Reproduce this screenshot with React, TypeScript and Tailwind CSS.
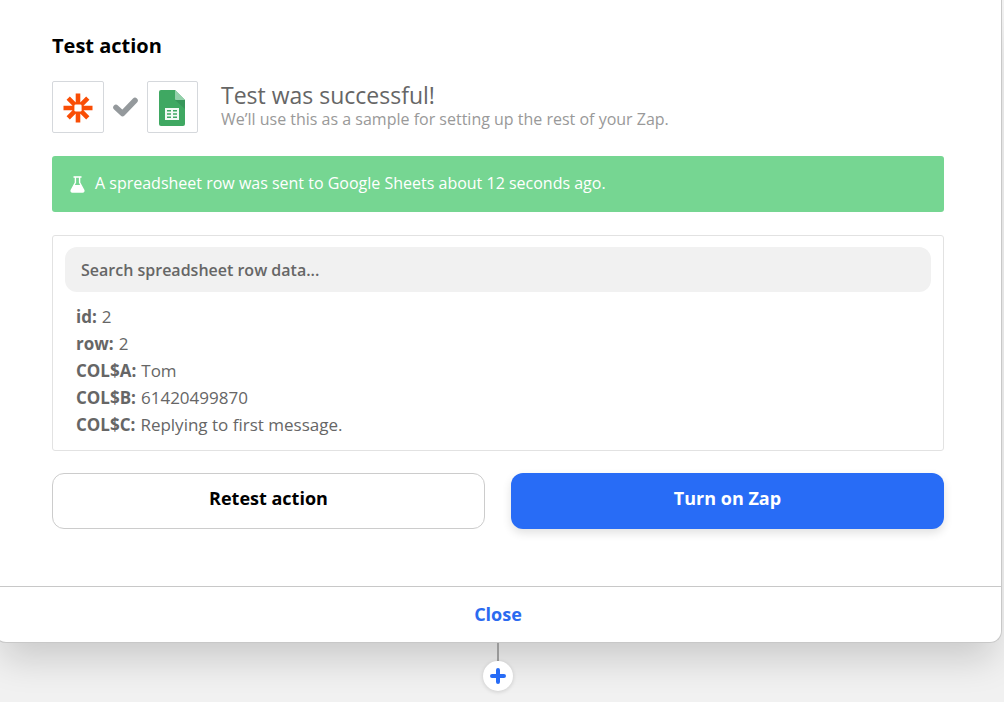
import { useState } from "react";

interface SampleField {
  label: string;
  value: string;
}

const fields: SampleField[] = [
  { label: "id", value: "2" },
  { label: "row", value: "2" },
  { label: "COL$A", value: "Tom" },
  { label: "COL$B", value: "61420499870" },
  { label: "COL$C", value: "Replying to first message." },
];

const ZapierIcon = () => (
  <svg width="30" height="30" viewBox="0 0 30 30" aria-hidden="true">
    <g stroke="#f94d05" strokeWidth="4.6">
      <path d="M15 0.5v29M0.5 15h29M5.2 5.2l19.6 19.6M24.8 5.2L5.2 24.8" />
    </g>
    <rect x="11.4" y="11.4" width="7.2" height="7.2" rx="1.4" fill="#fff" />
  </svg>
);

const SheetsIcon = () => (
  <svg width="26" height="36" viewBox="0 0 26 36" aria-hidden="true">
    <path d="M2 0h14l10 10v24a2 2 0 0 1-2 2H2a2 2 0 0 1-2-2V2a2 2 0 0 1 2-2z" fill="#3fa862" />
    <path d="M16 10h10v9z" fill="#37965a" />
    <path d="M16 0l10 10h-9a1 1 0 0 1-1-1z" fill="#93d0aa" />
    <path
      d="M6 18h14v12H6zM8 20v1.600h4v-1.600zM14 20v1.600h4v-1.600zM8 23.200v1.600h4v-1.600zM14 23.200v1.600h4v-1.600zM8 26.400v1.600h4v-1.600zM14 26.400v1.600h4v-1.600z"
      fill="#f3faf5"
      fillRule="evenodd"
    />
  </svg>
);

const CheckIcon = () => (
  <svg width="25" height="20" viewBox="0 0 25 20" aria-hidden="true">
    <path
      d="M3 10.5l6.5 6L22 3.5"
      fill="none"
      stroke="#94999c"
      strokeWidth="5.6"
      strokeLinecap="round"
      strokeLinejoin="round"
    />
  </svg>
);

const FlaskIcon = () => (
  <svg width="15" height="17" viewBox="0 0 15 17" aria-hidden="true">
    <path d="M3.5 1h8" stroke="#fff" strokeWidth="1.6" />
    <path
      d="M5.4 1v5.5L1.3 14c-.5 1 0 2 1.1 2h10.2c1.1 0 1.6-1 1.1-2L9.600 6.500V1"
      fill="none"
      stroke="#fff"
      strokeWidth="1.4"
    />
    <path d="M4 9h7l3.200 6-.8 1H1.600L.8 15z" fill="#fff" />
  </svg>
);

const App = () => {
  const [search, setSearch] = useState("");

  const visibleFields = fields.filter((field) =>
    `${field.label} ${field.value}`.toLowerCase().includes(search.toLowerCase())
  );

  return (
    <div className="min-h-screen overflow-hidden bg-[#f1f1f1] font-['Open_Sans',sans-serif] text-[#666]">
      <main className="-ml-1.5 mr-0.5 rounded-b-xl border border-t-0 border-[#c8c8c8] bg-white shadow-[0_24px_36px_-8px_rgba(0,0,0,0.16)]">
        <div className="px-[57px] pt-8 pb-[57px]">
          <h1 className="text-xl leading-7 font-bold text-black">Test action</h1>

          <div className="mt-[21px] flex items-center">
            <div className="flex h-13 w-13 items-center justify-center rounded-xs border border-[#d5d8dc] pt-0.5">
              <ZapierIcon />
            </div>
            <div className="mx-[9px]">
              <CheckIcon />
            </div>
            <div className="flex h-13 w-[51px] items-center justify-center rounded-xs border border-[#d5d8dc] pt-0.5 pr-px">
              <SheetsIcon />
            </div>
            <div className="ml-[23px]">
              <h2 className="text-[23px] leading-6">Test was successful!</h2>
              <p className="text-base leading-6 text-[#999]">
                We’ll use this as a sample for setting up the rest of your Zap.
              </p>
            </div>
          </div>

          <div className="mt-[23px] flex h-14 items-center gap-2.5 rounded-[3px] bg-[#76d692] px-[18px] text-white">
            <FlaskIcon />
            <p className="pb-0.5 text-base">A spreadsheet row was sent to Google Sheets about 12 seconds ago.</p>
          </div>

          <section className="mt-[23px] rounded-[3px] border border-[#e2e2e2] px-3 py-[11px]">
            <input
              type="search"
              value={search}
              onChange={(e) => setSearch(e.target.value)}
              aria-label="Search spreadsheet row data"
              placeholder="Search spreadsheet row data..."
              className="h-[45px] w-full rounded-xl bg-[#f1f1f1] px-4 text-base font-semibold outline-none placeholder:text-[#666]"
            />
            <dl className="mt-[11px] mb-px px-[11px] text-[17px] leading-[27px]">
              {visibleFields.map((field) => (
                <div key={field.label} className="flex gap-[5px]">
                  <dt className="font-bold">{field.label}:</dt>
                  <dd>{field.value}</dd>
                </div>
              ))}
            </dl>
          </section>

          <div className="mt-[22px] grid grid-cols-2 gap-[26px] text-lg font-bold">
            <button type="button" className="h-14 rounded-xl border border-[#ccc] pb-1.5 text-black">
              Retest action
            </button>
            <button
              type="button"
              className="h-14 rounded-xl bg-[#286cf6] pb-1.5 text-white shadow-[0_4px_10px_rgba(0,0,0,0.12)]"
            >
              Turn on Zap
            </button>
          </div>
        </div>

        <button
          type="button"
          className="h-14 w-full border-t border-[#c8c8c8] pb-0.5 text-lg font-bold text-[#2b6bf0]"
        >
          Close
        </button>
      </main>

      <div className="relative -ml-1.5 mr-0.5 flex flex-col items-center">
        <div className="h-[18px] w-0.5 bg-[#999]" />
        <button
          type="button"
          aria-label="Add step"
          className="flex h-[30px] w-[30px] items-center justify-center rounded-full bg-white shadow-[0_1px_4px_rgba(0,0,0,0.15)]"
        >
          <svg width="16" height="16" viewBox="0 0 16 16" aria-hidden="true">
            <path d="M8 2v12M2 8h12" stroke="#286cf6" strokeWidth="4" strokeLinecap="round" />
          </svg>
        </button>
      </div>
    </div>
  );
};

export default App;
